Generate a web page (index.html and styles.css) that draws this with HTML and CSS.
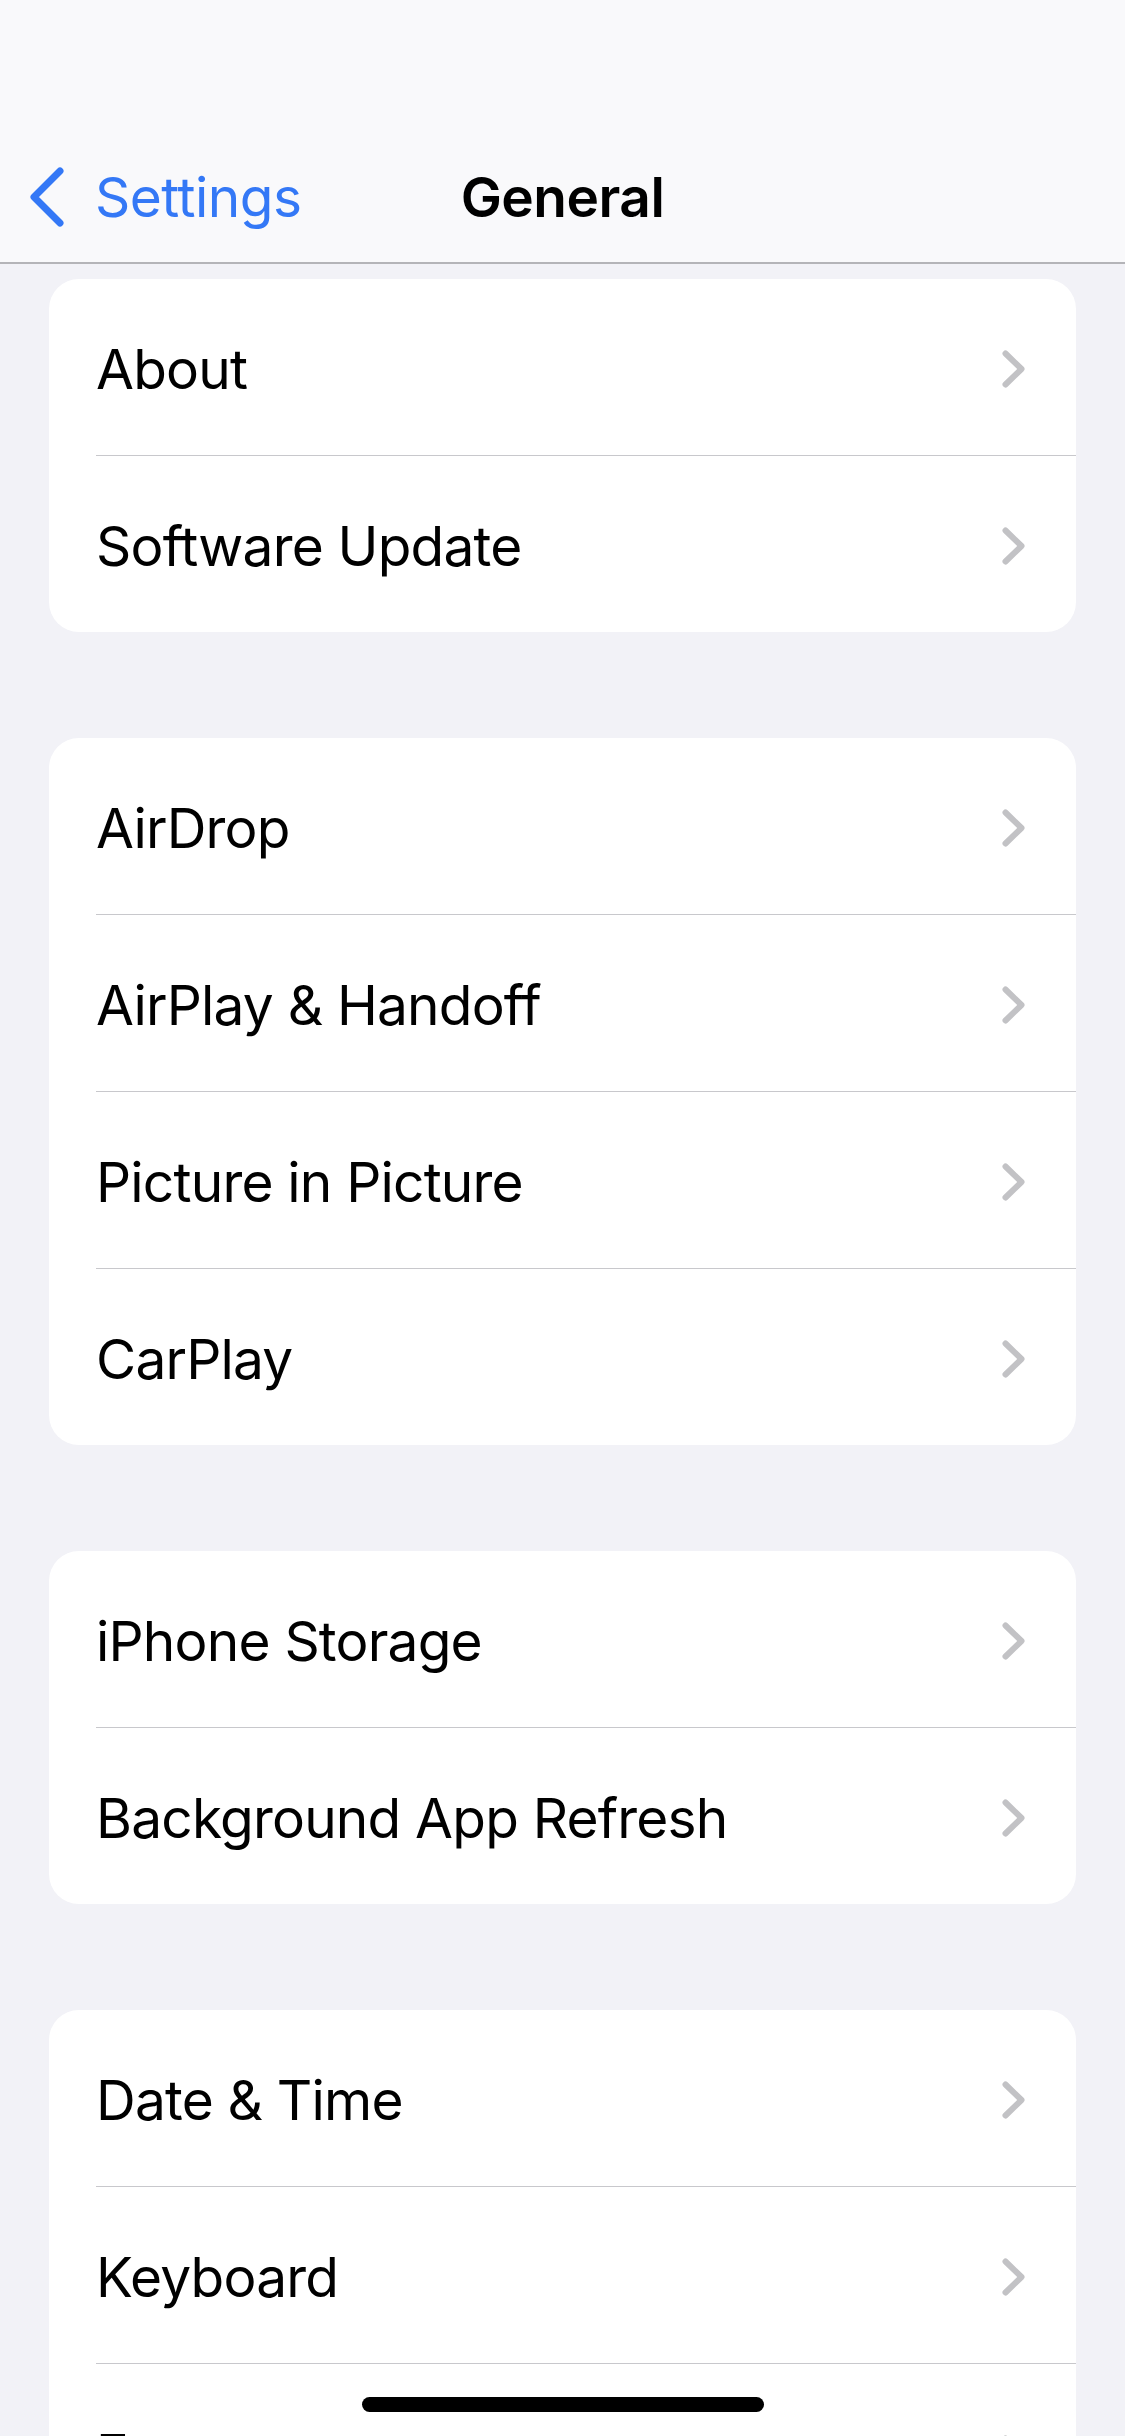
FILE: index.html
```html
<!DOCTYPE html>
<html lang="en">
<head>
    <meta charset="UTF-8">
    <meta name="viewport" content="width=device-width, initial-scale=1.0">
    <title>General</title>
    <link rel="stylesheet" href="styles.css">
</head>
<body>
    <div class="screen">
        <!-- Barra de navegación -->
        <header class="navbar">
            <div class="nav-row">
                <a class="back" href="#">
                    <svg class="back-icon" viewBox="0 0 37 62" width="37" height="62">
                        <path d="M32 5 L6 31 L32 57" fill="none" stroke="currentColor" stroke-width="7" stroke-linecap="round" stroke-linejoin="round"/>
                    </svg>
                    <span>Settings</span>
                </a>
                <h1 class="title">General</h1>
                <div></div>
            </div>
        </header>

        <!-- Lista de ajustes -->
        <main class="list">
            <section class="group">
                <a class="row" href="#"><div class="row-inner"><span>About</span><i class="chev"></i></div></a>
                <a class="row" href="#"><div class="row-inner"><span>Software Update</span><i class="chev"></i></div></a>
            </section>

            <section class="group">
                <a class="row" href="#"><div class="row-inner"><span>AirDrop</span><i class="chev"></i></div></a>
                <a class="row" href="#"><div class="row-inner"><span>AirPlay &amp; Handoff</span><i class="chev"></i></div></a>
                <a class="row" href="#"><div class="row-inner"><span>Picture in Picture</span><i class="chev"></i></div></a>
                <a class="row" href="#"><div class="row-inner"><span>CarPlay</span><i class="chev"></i></div></a>
            </section>

            <section class="group">
                <a class="row" href="#"><div class="row-inner"><span>iPhone Storage</span><i class="chev"></i></div></a>
                <a class="row" href="#"><div class="row-inner"><span>Background App Refresh</span><i class="chev"></i></div></a>
            </section>

            <section class="group">
                <a class="row" href="#"><div class="row-inner"><span>Date &amp; Time</span><i class="chev"></i></div></a>
                <a class="row" href="#"><div class="row-inner"><span>Keyboard</span><i class="chev"></i></div></a>
                <a class="row" href="#"><div class="row-inner"><span>Fonts</span><i class="chev"></i></div></a>
            </section>
        </main>

        <div class="home-indicator"></div>
    </div>

    <script>
        // Dibuja el chevron de cada fila
        const chevron = '<svg viewBox="0 0 23 38" width="23" height="38"><path d="M3.5 3.5 L19.5 19 L3.5 34.5" fill="none" stroke="#c2c2c5" stroke-width="6" stroke-linecap="round" stroke-linejoin="round"/></svg>';
        document.querySelectorAll(".chev").forEach((el) => {
            el.innerHTML = chevron;
        });
    </script>
</body>
</html>
```

FILE: styles.css
```css
/* Estilos generales */
body {
    margin: 0;
    padding: 0;
    background: #f2f2f7;
    font-family: Inter, "Noto Sans", Roboto, sans-serif;
    color: #000;
}

a {
    color: inherit;
    text-decoration: none;
}

.screen {
    position: relative;
    width: 1125px;
    height: 2436px;
    overflow: hidden;
    background: #f2f2f7;
}

/* Barra de navegación */
.navbar {
    height: 264px;
    padding-top: 132px;
    box-sizing: border-box;
    background: #f9f9fb;
    border-bottom: 2px solid #b4b4b8;
}

.nav-row {
    display: grid;
    grid-template-columns: 1fr auto 1fr;
    align-items: center;
    height: 130px;
}

.back {
    display: flex;
    align-items: center;
    gap: 30px;
    padding-left: 28px;
    color: #3478f6;
    font-size: 55px;
    letter-spacing: -0.5px;
}

.back-icon {
    display: block;
}

.title {
    margin: 0;
    font-size: 55px;
    font-weight: 600;
    letter-spacing: -0.5px;
}

/* Lista de grupos */
.list {
    display: flex;
    flex-direction: column;
    gap: 106px;
    padding: 15px 49px 0;
}

.group {
    background: #fff;
    border-radius: 30px;
    overflow: hidden;
}

.row {
    display: block;
    padding-left: 47px;
}

.row-inner {
    display: flex;
    align-items: center;
    justify-content: space-between;
    height: 176px;
    box-sizing: border-box;
    padding-top: 3px;
    padding-right: 51px;
    font-size: 55px;
    letter-spacing: -0.8px;
}

.row:not(:last-child) .row-inner {
    height: 177px;
    padding-top: 4px;
    border-bottom: 1px solid #c8c8cc;
}

.chev {
    display: block;
    width: 23px;
    height: 38px;
}

.chev svg {
    display: block;
}

/* Indicador de inicio */
.home-indicator {
    position: absolute;
    left: 50%;
    bottom: 24px;
    width: 402px;
    height: 15px;
    margin-left: -201px;
    border-radius: 8px;
    background: #000;
}
```
